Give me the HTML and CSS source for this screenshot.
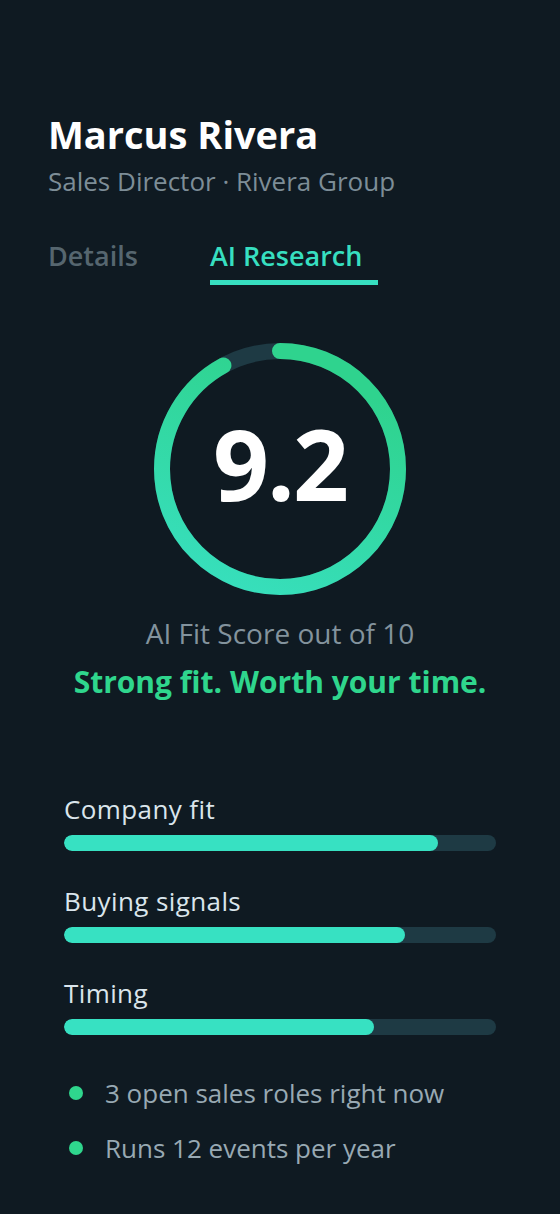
FILE: index.html
```html
<!DOCTYPE html>
<html lang="en">
<head>
    <meta charset="UTF-8">
    <meta name="viewport" content="width=device-width, initial-scale=1.0">
    <title>Marcus Rivera - AI Research</title>
    <link rel="stylesheet" href="styles.css">
</head>
<body>
    <div class="panel">
        <header class="contact">
            <h1 class="contact-name">Marcus Rivera</h1>
            <p class="contact-role">Sales Director · Rivera Group</p>
        </header>

        <nav class="tabs">
            <span class="tab">Details</span>
            <span class="tab tab-active">AI Research</span>
        </nav>

        <section class="score">
            <div class="ring">
                <svg width="252" height="252" viewBox="0 0 252 252">
                    <defs>
                        <linearGradient id="ringGrad" x1="0" y1="0" x2="1" y2="0.4">
                            <stop offset="0" stop-color="#38e0c1"/>
                            <stop offset="1" stop-color="#2fd38e"/>
                        </linearGradient>
                    </defs>
                    <!-- track -->
                    <circle cx="126" cy="126" r="118" fill="none" stroke="#1e3a44" stroke-width="16"/>
                    <!-- 9.2 of 10, starting at 12 o'clock -->
                    <circle cx="126" cy="126" r="118" fill="none" stroke="url(#ringGrad)" stroke-width="16"
                            stroke-linecap="round" stroke-dasharray="682.1 741.4"
                            transform="rotate(-90 126 126)"/>
                </svg>
                <span class="ring-value">9.2</span>
            </div>
            <p class="score-caption">AI Fit Score out of 10</p>
            <p class="score-verdict">Strong fit. Worth your time.</p>
        </section>

        <section class="factors">
            <div class="factor">
                <div class="factor-label">Company fit</div>
                <div class="bar"><div class="bar-fill" style="width: 86.5%"></div></div>
            </div>
            <div class="factor">
                <div class="factor-label">Buying signals</div>
                <div class="bar"><div class="bar-fill" style="width: 79%"></div></div>
            </div>
            <div class="factor">
                <div class="factor-label">Timing</div>
                <div class="bar"><div class="bar-fill" style="width: 71.7%"></div></div>
            </div>
        </section>

        <ul class="signals">
            <li>3 open sales roles right now</li>
            <li>Runs 12 events per year</li>
        </ul>
    </div>
</body>
</html>
```

FILE: styles.css
```css
body {
    margin: 0;
    background-color: #0f1a22;
    font-family: "Open Sans", Lato, sans-serif;
    color: #ffffff;
}
.panel {
    padding: 111px 48px 40px;
}
.contact-name {
    margin: 0;
    font-size: 38px;
    font-weight: 700;
    line-height: 46px;
}
.contact-role {
    margin: 8px 0 0;
    font-size: 26px;
    line-height: 32px;
    color: #7d8d97;
}
.tabs {
    display: flex;
    gap: 72px;
    margin-top: 42px;
}
.tab {
    font-size: 27px;
    font-weight: 600;
    line-height: 34px;
    padding-bottom: 7px;
    color: #56666f;
    border-bottom: 5px solid transparent;
}
.tab-active {
    padding-right: 16px;
    color: #37dfc0;
    border-bottom-color: #37dfc0;
}
.score {
    display: flex;
    flex-direction: column;
    align-items: center;
    margin-top: 58px;
}
.ring {
    display: grid;
    place-items: center;
}
.ring svg,
.ring-value {
    grid-area: 1 / 1;
}
.ring svg {
    display: block;
}
.ring-value {
    padding-bottom: 12px;
    font-size: 98px;
    font-weight: 700;
    line-height: 1;
    letter-spacing: -2px;
    color: #ffffff;
}
.score-caption {
    margin: 21px 0 0;
    font-size: 28px;
    line-height: 34px;
    color: #83939d;
}
.score-verdict {
    margin: 13px 0 0;
    font-size: 30px;
    font-weight: 700;
    line-height: 38px;
    color: #2fd68d;
}
.factors {
    display: flex;
    flex-direction: column;
    gap: 35px;
    margin: 93px 16px 0;
}
.factor-label {
    font-size: 26px;
    line-height: 30px;
    letter-spacing: 0.4px;
    color: #dae5ec;
    margin-bottom: 11px;
}
.bar {
    height: 16px;
    border-radius: 8px;
    background-color: #1e3a44;
    overflow: hidden;
}
.bar-fill {
    height: 100%;
    border-radius: 8px;
    background-color: #37e1c2;
}
.signals {
    list-style: none;
    margin: 42px 16px 0;
    padding: 0;
}
.signals li {
    display: flex;
    align-items: center;
    gap: 22px;
    font-size: 26px;
    line-height: 32px;
    color: #98a9b3;
    margin-bottom: 23px;
}
.signals li::before {
    content: "";
    width: 14px;
    height: 14px;
    margin-left: 5px;
    border-radius: 50%;
    background-color: #2fd68d;
    flex-shrink: 0;
}
```
